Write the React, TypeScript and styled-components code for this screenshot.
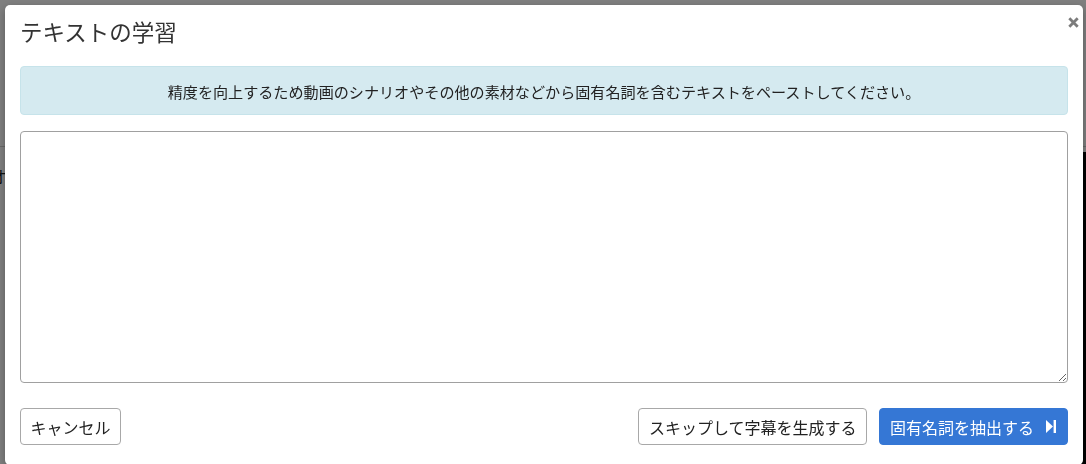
import styled, { createGlobalStyle } from "styled-components";

const GlobalStyle = createGlobalStyle`
    html, body {
        margin: 0;
        padding: 0;
        height: 100%;
        overflow: hidden;
    }

    body {
        font-family: "Noto Sans CJK JP", "Noto Sans", "Liberation Sans", sans-serif;
        background-color: #ffffff;
        color: #222;
    }
`

const Page = styled.div`
    display: flex;
    flex-direction: column;
    height: 464px;
`

const PageHeader = styled.div`
    height: 146px;
    border-bottom: 1px solid #d0d0d0;
    flex-shrink: 0;
`

const PageContent = styled.div`
    display: flex;
    flex-direction: row;
    flex: 1;
    padding-top: 5px;
`

const PageText = styled.div`
    flex: 1;
    margin-left: -9px;
    padding-top: 12px;
    font-size: 16px;
`

const PagePlayer = styled.div`
    width: 220px;
    background-color: #000;
`

const Backdrop = styled.div`
    position: fixed;
    inset: 0;
    background-color: rgba(0, 0, 0, 0.5);
`

const Modal = styled.div`
    position: fixed;
    top: 5px;
    left: 5px;
    width: 1078px;
    box-sizing: border-box;
    padding: 0 15px 20px 15px;
    background-color: #fff;
    border-radius: 5px;
    box-shadow: 0 3px 9px rgba(0, 0, 0, 0.3);
`

const ModalHeader = styled.div`
    padding-top: 11px;

    h4 {
        margin: 0;
        font-size: 22.5px;
        line-height: 31px;
        font-weight: 400;
        color: #333;
    }
`

const CloseButton = styled.button`
    position: absolute;
    top: 12px;
    right: 4px;
    width: 11px;
    height: 11px;
    padding: 0;
    border: none;
    background: none;
    cursor: pointer;
    display: flex;
`

const ModalBody = styled.div`
    display: flex;
    flex-direction: column;
    gap: 16px;
    margin-top: 19px;
`

const InfoAlert = styled.div`
    height: 49px;
    box-sizing: border-box;
    display: flex;
    align-items: center;
    justify-content: center;
    background-color: #d5eaf0;
    border: 1px solid #c6e3ea;
    border-radius: 4px;
    font-size: 15.1px;
    color: #222;
`

const TextInput = styled.textarea`
    height: 252px;
    box-sizing: border-box;
    border: 1px solid #a0a0a0;
    border-radius: 4px;
    padding: 6px 10px;
    font-family: inherit;
    font-size: 15px;
    outline: none;
`

const ModalFooter = styled.div`
    display: flex;
    flex-direction: row;
    align-items: center;
    margin-top: 25px;

    .spacer {
        flex: 1;
    }
`

const Button = styled.button<{ $primary?: boolean }>`
    display: flex;
    align-items: center;
    gap: 12px;
    height: 37px;
    box-sizing: border-box;
    padding: 0 ${(p) => (p.$primary ? "11px" : "9.5px")} 0 ${(p) => (p.$primary ? "10px" : "9.5px")};
    margin-left: ${(p) => (p.$primary ? "12px" : "0")};
    font-family: inherit;
    font-size: 16px;
    border-radius: 4px;
    cursor: pointer;
    color: ${(p) => (p.$primary ? "#fff" : "#222")};
    background-color: ${(p) => (p.$primary ? "#3577d5" : "#fff")};
    border: 1px solid ${(p) => (p.$primary ? "#3577d5" : "#a8a8a8")};
`

export default function App() {
    return (
        <>
            <GlobalStyle />
            <Page>
                <PageHeader />
                <PageContent>
                    <PageText>オ</PageText>
                    <PagePlayer />
                </PageContent>
            </Page>
            <Backdrop />
            <Modal>
                <ModalHeader>
                    <h4>テキストの学習</h4>
                    <CloseButton aria-label="閉じる">
                        <svg width="11" height="11" viewBox="0 0 11 11">
                            <path d="M1.3 1.3 L9.7 9.7 M9.7 1.3 L1.3 9.7" stroke="#7c7c7c" strokeWidth="2.8" />
                        </svg>
                    </CloseButton>
                </ModalHeader>

                <ModalBody>
                    <InfoAlert>
                        精度を向上するため動画のシナリオやその他の素材などから固有名詞を含むテキストをペーストしてください。
                    </InfoAlert>
                    <TextInput />
                </ModalBody>

                <ModalFooter>
                    <Button>キャンセル</Button>
                    <div className="spacer" />
                    <Button>スキップして字幕を生成する</Button>
                    <Button $primary>
                        固有名詞を抽出する
                        <svg width="10" height="13" viewBox="0 0 10 13">
                            <path d="M0 0 L7 6.5 L0 13 Z" fill="#fff" />
                            <rect x="7.6" y="0" width="2.4" height="13" fill="#fff" />
                        </svg>
                    </Button>
                </ModalFooter>
            </Modal>
        </>
    );
}
